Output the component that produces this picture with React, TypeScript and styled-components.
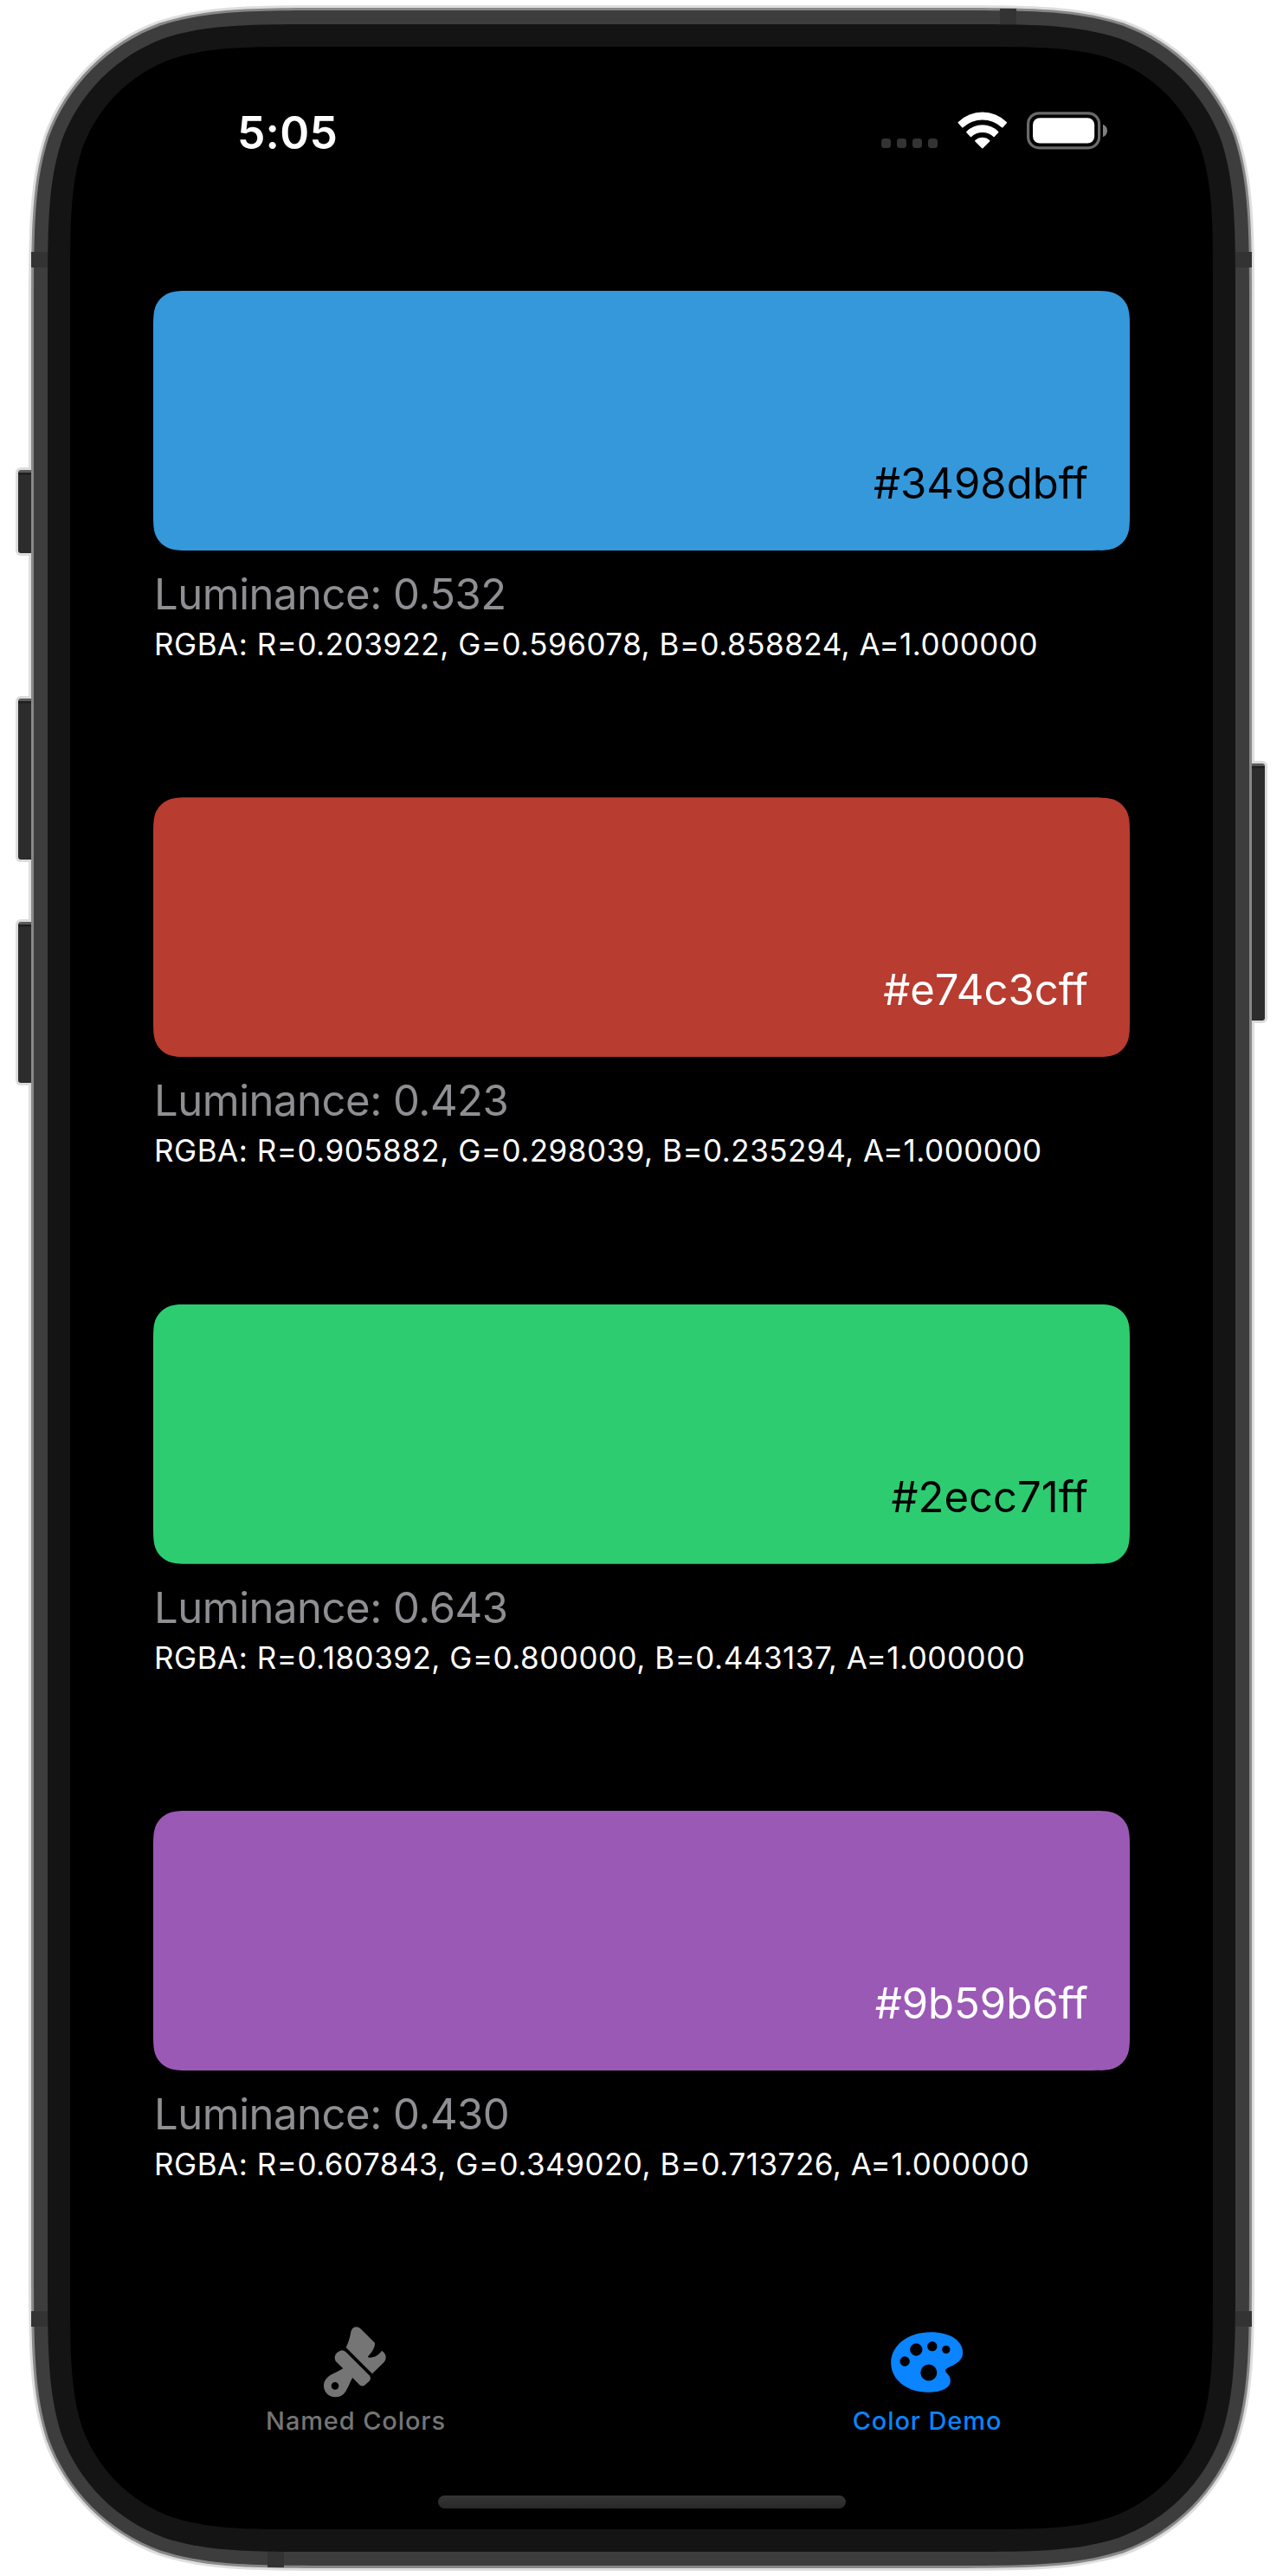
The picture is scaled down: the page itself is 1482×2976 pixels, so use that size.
import React from "react";
import styled, { createGlobalStyle } from "styled-components";

const GlobalStyle = createGlobalStyle`
  *, *::before, *::after { box-sizing: border-box; }
  html, body { margin: 0; padding: 0; background: #fff; }
  body {
    font-family: Inter, "Liberation Sans", sans-serif;
    font-variant-ligatures: none;
    -webkit-font-smoothing: antialiased;
  }
`;

/* Rounded rectangle with continuous curvature, as a CSS path() value. */
function squircle(w: number, h: number, r: number): string {
  const a = 1.52866483 * r;
  const b = 1.08849299 * r;
  const c = 0.86840695 * r;
  const d = 0.631494 * r;
  const e = 0.0749114 * r;
  const f = 0.37282396 * r;
  const g = 0.16905956 * r;
  const p = (x: number, y: number) => `${x.toFixed(2)} ${y.toFixed(2)}`;
  return [
    `M${p(a, 0)}`,
    `L${p(w - a, 0)}`,
    `C${p(w - b, 0)} ${p(w - c, 0)} ${p(w - d, e)}`,
    `C${p(w - f, g)} ${p(w - g, f)} ${p(w - e, d)}`,
    `C${p(w, c)} ${p(w, b)} ${p(w, a)}`,
    `L${p(w, h - a)}`,
    `C${p(w, h - b)} ${p(w, h - c)} ${p(w - e, h - d)}`,
    `C${p(w - g, h - f)} ${p(w - f, h - g)} ${p(w - d, h - e)}`,
    `C${p(w - c, h)} ${p(w - b, h)} ${p(w - a, h)}`,
    `L${p(a, h)}`,
    `C${p(b, h)} ${p(c, h)} ${p(d, h - e)}`,
    `C${p(f, h - g)} ${p(g, h - f)} ${p(e, h - d)}`,
    `C${p(0, h - c)} ${p(0, h - b)} ${p(0, h - a)}`,
    `L${p(0, a)}`,
    `C${p(0, b)} ${p(0, c)} ${p(e, d)}`,
    `C${p(g, f)} ${p(f, g)} ${p(d, e)}`,
    `C${p(c, 0)} ${p(b, 0)} ${p(a, 0)}Z`,
  ].join("");
}

const Page = styled.main`
  width: 1482px;
  height: 2976px;
  padding: 6px 33px;
  background: #fff;
  overflow: hidden;
`;

const Device = styled.div`
  position: relative;
  width: 1416px;
  height: 2964px;
`;

const Shell = styled.div<{ $w: number; $h: number; $r: number; $pad: number; $color: string }>`
  width: ${(p) => p.$w}px;
  height: ${(p) => p.$h}px;
  padding: ${(p) => p.$pad}px;
  background: ${(p) => p.$color};
  clip-path: path("${(p) => squircle(p.$w, p.$h, p.$r)}");
`;

const Antenna = styled.i<{ $x: number; $y: number }>`
  position: absolute;
  left: ${(p) => p.$x}px;
  top: ${(p) => p.$y}px;
  width: 19px;
  height: 18px;
  background: #333;
`;

const SideButton = styled.i<{ $side: "left" | "right"; $y: number; $h: number }>`
  position: absolute;
  ${(p) => p.$side}: -12px;
  top: ${(p) => p.$y}px;
  width: 15px;
  height: ${(p) => p.$h}px;
  background: linear-gradient(#5a5a5a 0 3px, #1e1e1e 3px 5px, #2c2c2c 6px);
  border-radius: ${(p) => (p.$side === "left" ? "3px 0 0 3px" : "0 3px 3px 0")};
  box-shadow: 0 0 0 3px #dcdcdc;
  clip-path: ${(p) => (p.$side === "left" ? "inset(-4px 0 -4px -4px)" : "inset(-4px -4px -4px 0)")};
`;

const Screen = styled.div`
  display: flex;
  flex-direction: column;
  width: 1320px;
  height: 2868px;
  color: #fff;
  background: #000;
  clip-path: path("${squircle(1320, 2868, 186)}");
`;

const StatusBar = styled.header`
  display: flex;
  align-items: flex-start;
  justify-content: space-between;
  flex: none;
  height: 177px;
  padding: 72px 121px 0 193px;
`;

const Clock = styled.time`
  font-size: 51.500px;
  font-weight: 600;
  line-height: 54px;
  letter-spacing: 0.2px;
`;

const StatusIcons = styled.div`
  display: flex;
  align-items: flex-start;
  padding-top: 3px;
`;

const Signal = styled.div`
  display: flex;
  gap: 7px;
  margin: 31px 23px 0 0;
`;

const SignalDot = styled.i`
  width: 11px;
  height: 11px;
  border-radius: 3.5px;
  background: #333;
`;

const Battery = styled.svg`
  margin-left: 22px;
`;

const Palettes = styled.section`
  display: flex;
  flex-direction: column;
  gap: 153.33px;
  padding: 105px 96px 0;
`;

const Sample = styled.article`
  display: flex;
  flex-direction: column;
`;

const Swatch = styled.div<{ $fill: string; $ink: string }>`
  display: flex;
  flex: none;
  align-items: flex-end;
  justify-content: flex-end;
  width: 1128px;
  height: 300px;
  padding: 0 48px 47px;
  color: ${(p) => p.$ink};
  background: ${(p) => p.$fill};
  clip-path: path("${squircle(1128, 300, 30)}");
`;

const Hex = styled.span`
  font-size: 49px;
  line-height: 60px;
`;

const Luminance = styled.p`
  margin: 21px 0 3px 1px;
  color: #8e8e93;
  font-size: 49px;
  line-height: 60px;
  letter-spacing: -0.48px;
`;

const Rgba = styled.p`
  margin: 0 0 0 1px;
  font-size: 35px;
  line-height: 48px;
  letter-spacing: 0.51px;
  white-space: nowrap;
`;

const TabBar = styled.nav`
  display: grid;
  grid-template-columns: 1fr 1fr;
  margin-top: auto;
`;

const Tab = styled.a<{ $active?: boolean }>`
  display: flex;
  flex-direction: column;
  align-items: center;
  gap: 9px;
  color: ${(p) => (p.$active ? "#0a84ff" : "#757575")};
`;

const TabIcon = styled.span`
  display: flex;
  align-items: center;
  justify-content: center;
  height: 82px;
`;

const TabLabel = styled.span`
  font-size: 29px;
  font-weight: 500;
  line-height: 36px;
  letter-spacing: 0.88px;
`;

const HomeIndicator = styled.div`
  align-self: center;
  width: 471px;
  height: 15px;
  margin: 68px 0 24px;
  border-radius: 8px;
  background: linear-gradient(#353535, #292929);
`;

const WifiIcon = () => (
  <svg width="58" height="43" viewBox="0 0 58 43" fill="#fff">
    <path d="M.8 13.2Q.2 12.6.8 12A40 40 0 0 1 56.8 12Q57.4 12.6 56.8 13.2L52.4 18.2Q51.8 18.8 51.2 18.2A33.4 33.4 0 0 0 6.4 18.2Q5.8 18.8 5.2 18.2Z" />
    <path d="M10.4 24.2Q9.8 23.6 10.4 23A26 26 0 0 1 47.2 23Q47.8 23.6 47.2 24.2L42.7 28.9Q42.1 29.5 41.5 28.9A18.6 18.6 0 0 0 16.1 28.9Q15.5 29.5 14.9 28.9Z" />
    <path d="M20.4 34.4Q19.8 33.7 20.4 33A12.8 12.8 0 0 1 37.2 33Q37.8 33.7 37.2 34.4L29.4 42.2Q28.8 42.8 28.2 42.2Z" />
  </svg>
);

const BatteryIcon = () => (
  <Battery width="94" height="44" viewBox="0 0 94 44">
    <rect x="1.6" y="1.8" width="82" height="40" rx="12.5" fill="none" stroke="#6a6a6a" strokeWidth="3.2" />
    <rect x="7" y="7.2" width="71.2" height="29.300" rx="8" fill="#fff" />
    <path d="M88 14.8C91.400 16.300 93 18.800 93 22S91.400 27.800 88 29.300Z" fill="#808080" />
  </Battery>
);

const BrushIcon = () => (
  <svg width="73" height="82" viewBox="283 85 219 246" fill="currentColor" fillRule="evenodd" overflow="visible">
    <path d="M357 157C367 136 371 120 374 102Q379 86 393 86Q402 86 409 93L457 141Q459 160 434 187Q431 192 439 192C458 191 470 183 481 168Q496 178 495 194Q494 203 488 209L448 248Z" />
    <path d="M325 176L327 174Q343 160 356 172L438 254Q446 264 438 273L424 286Q414 295 404 287L380 262C372 273 368 290 356 309Q343 329 319 329C297 329 280 312 280 290C280 270 293 258 308 250Q330 240 347 230L321 204Q313 191 325 176ZM319 277A13 13 0 1 0 319 303A13 13 0 1 0 319 277Z" />
  </svg>
);

const PaletteIcon = () => (
  <svg width="83.300" height="70" viewBox="206.500 100 250 210" fill="currentColor" fillRule="evenodd">
    <path
      d="M345 101C410 101 456 130 456 172C456 194 441 207 415 219C400 226 394 230 396 236C399 244 413 250 413 270C413 295 380 309 335 309C262 309 207 265 207 207C207 148 265 101 345 101Z
      M255 185A17 17 0 1 0 255 219A17 17 0 1 0 255 185Z
      M294.500 140A21.500 21.500 0 1 0 294.500 183A21.500 21.500 0 1 0 294.500 140Z
      M350 133A17 17 0 1 0 350 167A17 17 0 1 0 350 133Z
      M398 147A14 14 0 1 0 398 175A14 14 0 1 0 398 147Z
      M338 212.500A28.500 28.500 0 1 0 338 269.500A28.500 28.500 0 1 0 338 212.500Z"
    />
  </svg>
);

const samples = [
  { fill: "#3498db", ink: "#000", hex: "#3498dbff", lum: "0.532", rgba: "R=0.203922, G=0.596078, B=0.858824, A=1.000000" },
  { fill: "#b83c30", ink: "#fff", hex: "#e74c3cff", lum: "0.423", rgba: "R=0.905882, G=0.298039, B=0.235294, A=1.000000" },
  { fill: "#2ecc71", ink: "#000", hex: "#2ecc71ff", lum: "0.643", rgba: "R=0.180392, G=0.800000, B=0.443137, A=1.000000" },
  { fill: "#9b59b6", ink: "#fff", hex: "#9b59b6ff", lum: "0.430", rgba: "R=0.607843, G=0.349020, B=0.713726, A=1.000000" },
];

export default function App() {
  return (
    <Page>
      <GlobalStyle />
      <Device>
        <Shell $w={1416} $h={2964} $r={238} $pad={3} $color="#dedede">
          <Shell $w={1410} $h={2958} $r={235} $pad={3} $color="#888">
            <Shell $w={1404} $h={2952} $r={232} $pad={16} $color="#3d3d3d">
              <Shell $w={1372} $h={2920} $r={214} $pad={26} $color="#141414">
                <Screen>
                  <StatusBar>
                    <Clock>5:05</Clock>
                    <StatusIcons>
                      <Signal>
                        <SignalDot />
                        <SignalDot />
                        <SignalDot />
                        <SignalDot />
                      </Signal>
                      <WifiIcon />
                      <BatteryIcon />
                    </StatusIcons>
                  </StatusBar>
                  <Palettes>
                    {samples.map((s) => (
                      <Sample key={s.hex}>
                        <Swatch $fill={s.fill} $ink={s.ink}>
                          <Hex>{s.hex}</Hex>
                        </Swatch>
                        <Luminance>Luminance: {s.lum}</Luminance>
                        <Rgba>RGBA: {s.rgba}</Rgba>
                      </Sample>
                    ))}
                  </Palettes>
                  <TabBar>
                    <Tab>
                      <TabIcon>
                        <BrushIcon />
                      </TabIcon>
                      <TabLabel>Named Colors</TabLabel>
                    </Tab>
                    <Tab $active>
                      <TabIcon>
                        <PaletteIcon />
                      </TabIcon>
                      <TabLabel>Color Demo</TabLabel>
                    </Tab>
                  </TabBar>
                  <HomeIndicator />
                </Screen>
              </Shell>
            </Shell>
          </Shell>
        </Shell>
        <Antenna $x={3} $y={285} />
        <Antenna $x={1394} $y={285} />
        <Antenna $x={3} $y={2664} />
        <Antenna $x={1394} $y={2664} />
        <Antenna $x={1122} $y={4} />
        <Antenna $x={276} $y={2942} />
        <SideButton $side="left" $y={537} $h={96} />
        <SideButton $side="left" $y={801} $h={186} />
        <SideButton $side="left" $y={1059} $h={186} />
        <SideButton $side="right" $y={876} $h={297} />
      </Device>
    </Page>
  );
}
